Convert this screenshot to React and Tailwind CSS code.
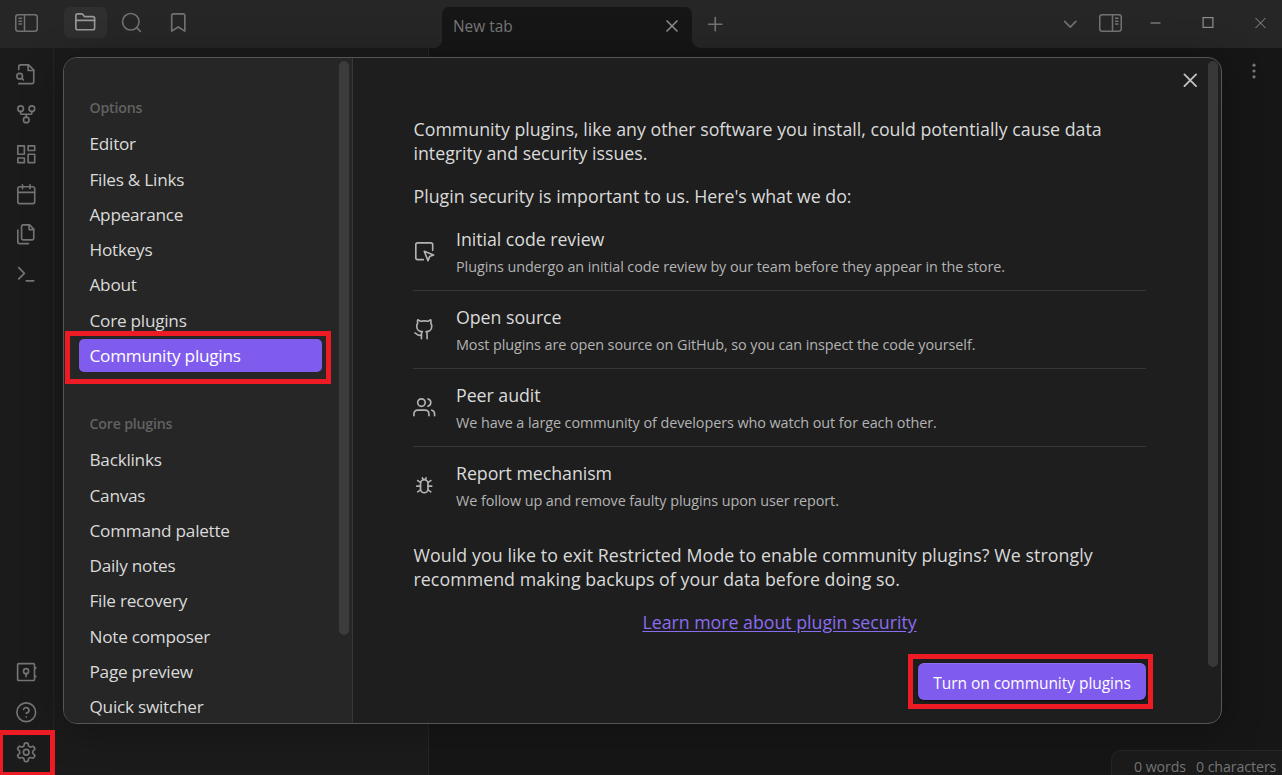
import React from "react";

function Icon({ children, size = 22.5, sw = 1.75, className = "" }) {
  return (
    <svg
      width={size}
      height={size}
      viewBox="0 0 24 24"
      fill="none"
      stroke="currentColor"
      strokeWidth={sw}
      strokeLinecap="round"
      strokeLinejoin="round"
      className={"shrink-0 " + className}
    >
      {children}
    </svg>
  );
}

function PanelIcon({ right = false }) {
  return (
    <svg
      width="23"
      height="18"
      viewBox="0 0 23 18"
      fill="none"
      stroke="currentColor"
      strokeWidth="1.5"
      className={right ? "shrink-0 -scale-x-100" : "shrink-0"}
    >
      <rect x="0.75" y="0.75" width="21.5" height="16.5" rx="2.5" />
      <path d="M9.5 1v16M3.5 4.3h3.5M3.5 7.2h3.5M3.5 10.1h3.5" />
    </svg>
  );
}

const railTop = [
  <>
    <path d="M4 22h14a2 2 0 0 0 2-2V7.5L14.5 2H6a2 2 0 0 0-2 2v3" />
    <path d="M14 2v6h6" />
    <circle cx="5" cy="14" r="3" />
    <path d="m9 18-1.5-1.5" />
  </>,
  <>
    <circle cx="12" cy="18" r="3" />
    <circle cx="6" cy="6" r="3" />
    <circle cx="18" cy="6" r="3" />
    <path d="M18 9v2c0 .6-.4 1-1 1H7c-.6 0-1-.4-1-1V9M12 12v3" />
  </>,
  <>
    <rect width="7" height="9" x="3" y="3" />
    <rect width="7" height="5" x="14" y="3" />
    <rect width="7" height="9" x="14" y="12" />
    <rect width="7" height="5" x="3" y="16" />
  </>,
  <>
    <rect width="18" height="18" x="3" y="4" rx="2" />
    <path d="M16 2v4M8 2v4M3 10h18" />
  </>,
  <>
    <path d="M15.5 2H8.6c-.4 0-.8.2-1.1.5-.3.3-.5.7-.5 1.1v12.8c0 .4.2.8.5 1.1.3.3.7.5 1.1.5h9.8c.4 0 .8-.2 1.1-.5.3-.3.5-.7.5-1.1V6.5L15.5 2z" />
    <path d="M3 7.6v12.8c0 .4.2.8.5 1.1.3.3.7.5 1.1.5h9.8" />
    <path d="M15 2v5h5" />
  </>,
  <path d="m4 17 6-6-6-6M12 19h8" />,
];

const railBottom = [
  <>
    <rect x="2.8" y="2.8" width="18" height="18" rx="1.2" />
    <circle cx="11.8" cy="10.8" r="2.7" />
    <path d="M11.8 13.5v3.3M22 7v1M22 16v1" />
  </>,
  <>
    <circle cx="12" cy="12" r="10" />
    <path d="M9.09 9a3 3 0 0 1 5.83 1c0 2-3 3-3 3M12 17h.01" />
  </>,
  <>
    <path d="M12.22 2h-.44a2 2 0 0 0-2 2v.18a2 2 0 0 1-1 1.73l-.43.25a2 2 0 0 1-2 0l-.15-.08a2 2 0 0 0-2.73.73l-.22.38a2 2 0 0 0 .73 2.73l.15.1a2 2 0 0 1 1 1.72v.51a2 2 0 0 1-1 1.74l-.15.09a2 2 0 0 0-.73 2.73l.22.38a2 2 0 0 0 2.73.73l.15-.08a2 2 0 0 1 2 0l.43.25a2 2 0 0 1 1 1.73V20a2 2 0 0 0 2 2h.44a2 2 0 0 0 2-2v-.18a2 2 0 0 1 1-1.73l.43-.25a2 2 0 0 1 2 0l.15.08a2 2 0 0 0 2.73-.73l.22-.39a2 2 0 0 0-.73-2.73l-.15-.08a2 2 0 0 1-1-1.74v-.5a2 2 0 0 1 1-1.74l.15-.09a2 2 0 0 0 .73-2.73l-.22-.38a2 2 0 0 0-2.73-.73l-.15.08a2 2 0 0 1-2 0l-.43-.25a2 2 0 0 1-1-1.73V4a2 2 0 0 0-2-2z" />
    <circle cx="12" cy="12" r="3" />
  </>,
];

const options = ["Editor", "Files & Links", "Appearance", "Hotkeys", "About", "Core plugins", "Community plugins"];
const corePlugins = [
  "Backlinks",
  "Canvas",
  "Command palette",
  "Daily notes",
  "File recovery",
  "Note composer",
  "Page preview",
  "Quick switcher",
];

const measures = [
  {
    title: "Initial code review",
    text: "Plugins undergo an initial code review by our team before they appear in the store.",
    icon: (
      <>
        <path d="M21 11V5a2 2 0 0 0-2-2H5a2 2 0 0 0-2 2v14a2 2 0 0 0 2 2h6" />
        <path d="m12 12 4 10 1.7-4.3L22 16Z" />
      </>
    ),
  },
  {
    title: "Open source",
    text: "Most plugins are open source on GitHub, so you can inspect the code yourself.",
    icon: (
      <>
        <path d="M15 22v-4a4.8 4.8 0 0 0-1-3.5c3 0 6-2 6-5.5.08-1.25-.27-2.48-1-3.5.28-1.15.28-2.35 0-3.5 0 0-1 0-3 1.5-2.64-.5-5.36-.5-8 0C6 2 5 2 5 2c-.3 1.15-.3 2.35 0 3.5A5.403 5.403 0 0 0 4 9c0 3.5 3 5.5 6 5.5-.39.49-.68 1.05-.85 1.65-.17.6-.22 1.23-.15 1.85v4" />
        <path d="M9 18c-4.51 2-5-2-7-2" />
      </>
    ),
  },
  {
    title: "Peer audit",
    text: "We have a large community of developers who watch out for each other.",
    icon: (
      <>
        <path d="M17 21v-2a4 4 0 0 0-4-4H5a4 4 0 0 0-4 4v2" />
        <circle cx="9" cy="7" r="4" />
        <path d="M23 21v-2a4 4 0 0 0-3-3.87M16 3.13a4 4 0 0 1 0 7.75" />
      </>
    ),
  },
  {
    title: "Report mechanism",
    text: "We follow up and remove faulty plugins upon user report.",
    icon: (
      <>
        <rect width="8" height="14" x="8" y="6" rx="4" />
        <path d="m19 7-3 2M5 7l3 2M19 19l-3-2M5 19l3-2M20 13h-4M4 13h4M10 4l1 2M14 4l-1 2" />
      </>
    ),
  },
];

function NavGroup({ title, items, active }) {
  return (
    <div>
      <div className="flex h-[20px] items-center pl-[10.5px] text-[14.2px] font-semibold tracking-[-0.2px] text-[#626262]">{title}</div>
      <ul className="mt-[9px] flex flex-col gap-[2.25px]">
        {items.map((item) => (
          <li
            key={item}
            className={
              item === active
                ? "flex h-[33px] items-center rounded-[5px] bg-[#7f5bee] pl-[10.5px] pt-[1.5px] text-white"
                : "flex h-[33px] items-center pl-[10.5px] pt-[1.5px]"
            }
          >
            {item}
          </li>
        ))}
      </ul>
    </div>
  );
}

function TitleBar() {
  return (
    <header className="flex h-[48px] shrink-0 bg-[#262626] text-[#727272]">
      <div className="flex w-[442px] items-start">
        <div className="ml-[15px] mt-[14px]"><PanelIcon /></div>
        <div className="ml-[26px] mt-[7px] flex h-[31px] w-[43px] items-center justify-center rounded-[6px] bg-[#2f2f2f] text-[#999]">
          <Icon>
            <path d="M4 20h16a2 2 0 0 0 2-2V8a2 2 0 0 0-2-2h-7.93a2 2 0 0 1-1.66-.9l-.82-1.2A2 2 0 0 0 7.93 3H4a2 2 0 0 0-2 2v13c0 1.1.9 2 2 2Z" />
            <path d="M2 10h20" />
          </Icon>
        </div>
        <div className="ml-[13px] mt-[11px]">
          <Icon><circle cx="11.5" cy="11.5" r="8.8" /><path d="m21.7 21.7-3.9-3.9" /></Icon>
        </div>
        <div className="ml-[24px] mt-[11px]">
          <Icon><path d="m19 21.5-7-4.5-7 4.5V5a2 2 0 0 1 2-2h10a2 2 0 0 1 2 2v16.5z" /></Icon>
        </div>
      </div>
      <div className="relative mt-[7px] flex w-[250px] items-center justify-between rounded-t-[7px] bg-[#161616] pb-[2px] pl-[11px] pr-[10px] before:absolute before:-left-[8px] before:bottom-0 before:size-[8px] before:bg-[radial-gradient(circle_at_0_0,#262626_7.5px,#161616_8px)] after:absolute after:-right-[8px] after:bottom-0 after:size-[8px] after:bg-[radial-gradient(circle_at_100%_0,#262626_7.5px,#161616_8px)]">
        <span className="pt-px text-[15.4px] text-[#777]">New tab</span>
        <Icon size={20} sw={2} className="-mt-[2px] text-[#8a8a8a]"><path d="M18 6 6 18M6 6l12 12" /></Icon>
      </div>
      <div className="flex flex-1 items-start">
        <div className="ml-[12px] mt-[13px]"><Icon><path d="M12 5v14M5 12h14" /></Icon></div>
        <div className="ml-auto mt-[13px]"><Icon><path d="m6 9 6 6 6-6" /></Icon></div>
        <div className="ml-[17.5px] mt-[14px]"><PanelIcon right /></div>
        <svg className="ml-[28px] mr-[12.5px] mt-[12px] shrink-0" width="120" height="22" viewBox="0 0 120 22" fill="none" stroke="#909090">
          <path d="M0.5 11h10" stroke="#777" strokeWidth="1.5" />
          <rect x="53.1" y="5.6" width="9.8" height="9.8" strokeWidth="1.2" />
          <path d="m105.5 6 10 10M115.5 6l-10 10" />
        </svg>
      </div>
    </header>
  );
}

function SettingsDialog() {
  return (
    <div className="absolute left-[63px] top-[57px] flex h-[667px] w-[1159px] overflow-hidden rounded-[14px] border border-[#565656] bg-[#1e1e1e] text-[#dadada] shadow-[0_4px_40px_rgba(0,0,0,0.3)]">
      <nav className="flex w-[289px] shrink-0 overflow-hidden border-r border-[#363636] bg-[#262626] text-[17.2px] tracking-[-0.25px]">
        <div className="ml-[15px] mt-[40px] flex w-[243px] flex-col gap-[42.5px]">
          <NavGroup title="Options" items={options} active="Community plugins" />
          <NavGroup title="Core plugins" items={corePlugins} />
        </div>
        <div className="ml-[17px] mt-[3px] h-[574px] w-[10px] rounded-full bg-[#3c3c3c]" />
      </nav>
      <main className="ml-[60px] mt-[59px] w-[733px] shrink-0 text-[17.8px] leading-[24px]">
        <p className="whitespace-nowrap pl-[0.5px] tracking-[-0.01px]">
          Community plugins, like any other software you install, could potentially cause data
          <br />
          integrity and security issues.
        </p>
        <p className="mt-[19px] pl-[0.5px] tracking-[-0.01px]">Plugin security is important to us. Here's what we do:</p>
        <ul className="mt-[5px]">
          {measures.map((m) => (
            <li key={m.title} className="flex h-[78px] items-center border-b border-[#363636] last:border-transparent">
              <Icon className="text-[#b3b3b3]">{m.icon}</Icon>
              <div className="ml-[20.5px] pt-[2px]">
                <div className="leading-[26px] tracking-[-0.05px]">{m.title}</div>
                <div className="mt-[3px] text-[14.4px] leading-[24px] tracking-[-0.075px] text-[#b3b3b3]">{m.text}</div>
              </div>
            </li>
          ))}
        </ul>
        <p className="mt-[18px] whitespace-nowrap pl-[0.5px] tracking-[0.08px]">
          Would you like to exit Restricted Mode to enable community plugins? We strongly
          <br />
          <span className="tracking-[0.04px]">recommend making backups of your data before doing so.</span>
        </p>
        <p className="mt-[19px] text-center tracking-[-0.03px]">
          <a className="text-[#8a6cf0] underline underline-offset-2">Learn more about plugin security</a>
        </p>
        <div className="mt-[29px] flex justify-end">
          <button className="h-[37px] w-[228px] rounded-[6px] bg-[#7f5bee] pt-[3px] text-[15.5px] tracking-[-0.04px] text-white shadow-[0_1px_2px_rgba(0,0,0,0.7),inset_0_1px_0_rgba(255,255,255,0.12)]">
            Turn on community plugins
          </button>
        </div>
      </main>
      <div className="ml-auto mr-[3px] flex items-start">
        <Icon className="mr-[6.5px] mt-[11px] text-[#c0c0c0]" sw={2}><path d="M18.2 5.8 5.8 18.2M5.8 5.8l12.4 12.4" /></Icon>
        <div className="mt-[3px] h-[606px] w-[10px] rounded-full bg-[#383838]" />
      </div>
    </div>
  );
}

export default function App() {
  return (
    <div className="relative flex h-[775px] w-[1282px] flex-col overflow-hidden bg-[#161616] font-['Open_Sans','Noto_Sans',sans-serif]">
      <TitleBar />
      <div className="flex min-h-0 flex-1">
        <aside className="flex w-[54px] shrink-0 flex-col items-center justify-between border-r border-[#242424] bg-[#1b1b1b] pb-[12px] pr-[1px] pt-[15px] text-[#757575]">
          <div className="flex flex-col gap-[17.5px]">
            {railTop.map((icon, i) => <Icon key={i}>{icon}</Icon>)}
          </div>
          <div className="flex flex-col gap-[17.5px]">
            {railBottom.map((icon, i) => <Icon key={i}>{icon}</Icon>)}
          </div>
        </aside>
        <div className="w-[375px] shrink-0 border-r border-[#252525] bg-[#1b1b1b]" />
        <div className="flex flex-1 flex-col items-end justify-between">
          <svg width="6" height="18" className="mr-[25px] mt-[14px]" fill="#777">
            <circle cx="3" cy="3.2" r="1.6" />
            <circle cx="3" cy="9" r="1.6" />
            <circle cx="3" cy="14.8" r="1.6" />
          </svg>
          <footer className="flex h-[25px] w-[171px] gap-[10px] overflow-hidden whitespace-nowrap rounded-tl-[10px] border-l border-t border-[#262626] bg-[#1b1b1b] pl-[22px] pt-[5px] text-[14.2px] leading-[21px] tracking-[-0.08px] text-[#757575]">
            <span>0 words</span>
            <span>0 characters</span>
          </footer>
        </div>
      </div>
      <SettingsDialog />
      <div className="absolute left-[65px] top-[331px] h-[53px] w-[266px] border-[5px] border-[#ed1c24]" />
      <div className="absolute left-[908px] top-[654px] h-[55px] w-[245px] border-[5px] border-[#ed1c24]" />
      <div className="absolute left-0 top-[730px] h-[45px] w-[55px] border-[5px] border-b-[3px] border-l-[3px] border-[#ed1c24]" />
    </div>
  );
}
